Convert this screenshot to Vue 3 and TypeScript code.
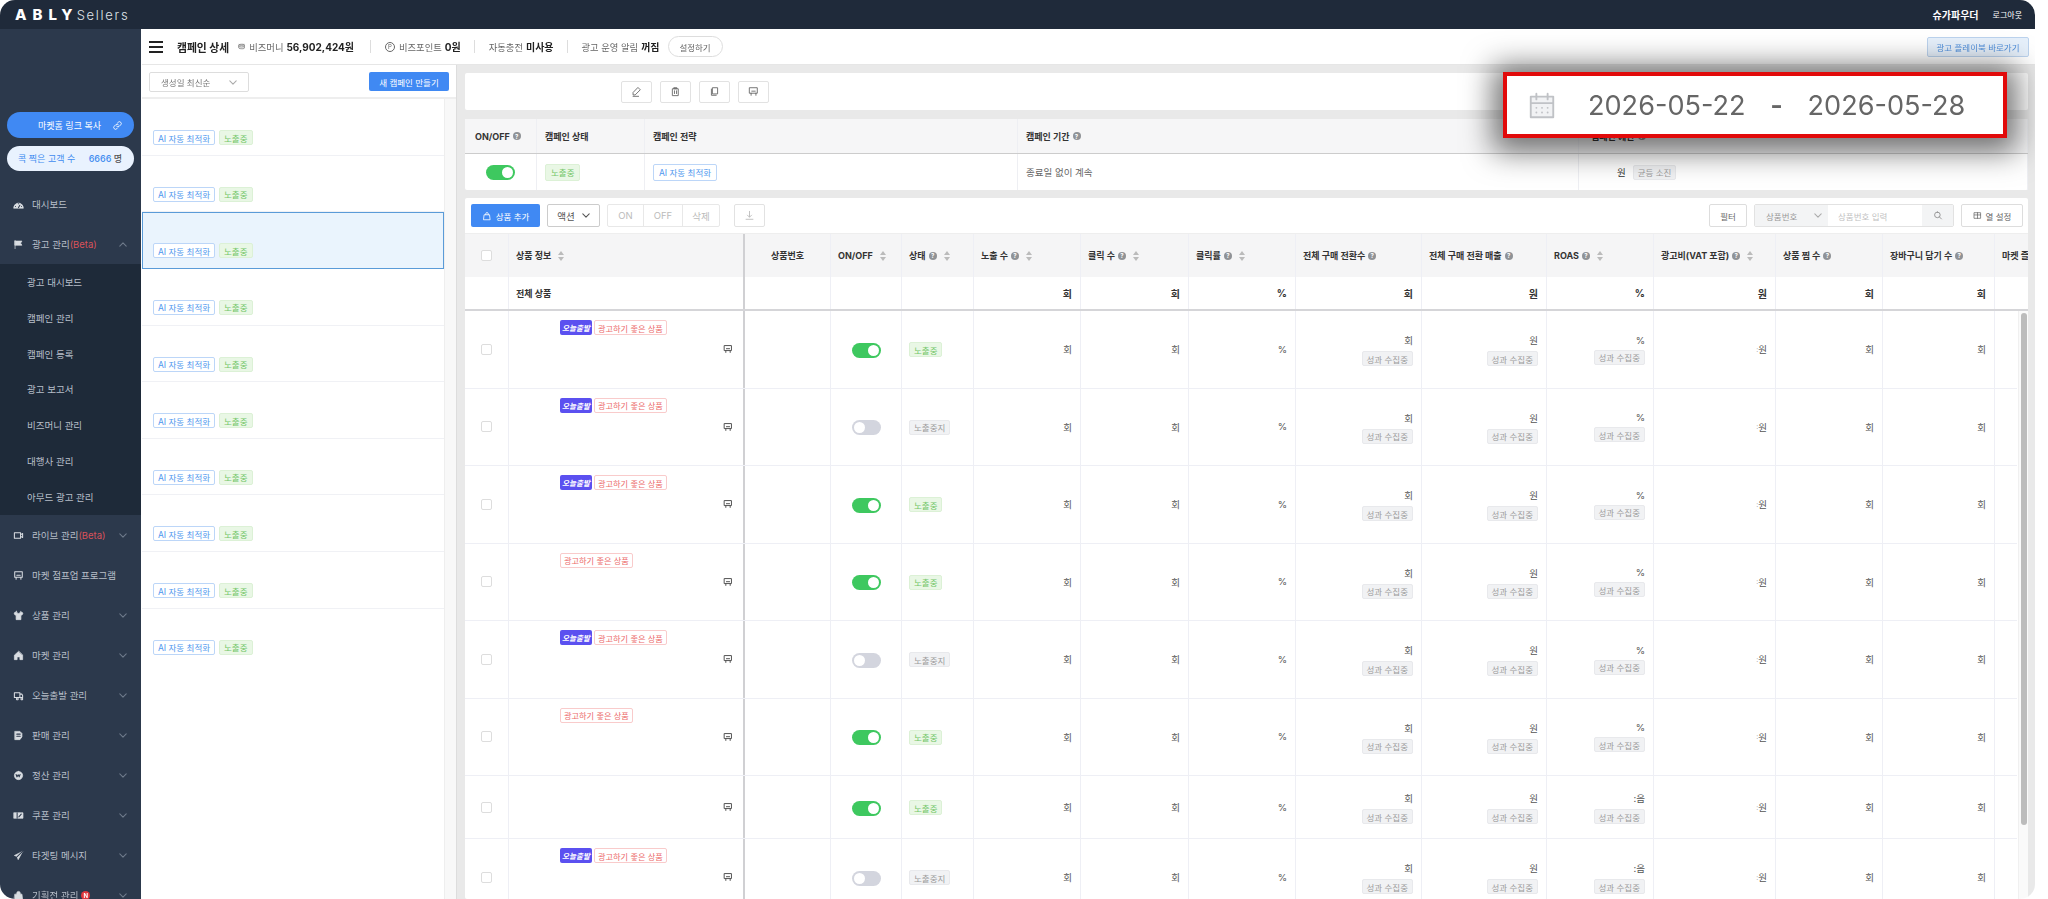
<script setup lang="ts">
type Row = { purple: boolean; red: boolean; on: boolean; roas: string };

const subMenu = ["광고 대시보드", "캠페인 관리", "캠페인 등록", "광고 보고서", "비즈머니 관리", "대행사 관리", "아무드 광고 관리"];
const navBottom = [
    { label: "라이브 관리", icon: "video", beta: true, line: true },
    { label: "마켓 점프업 프로그램", icon: "board", noArrow: true, line: true },
    { label: "상품 관리", icon: "shirt" },
    { label: "마켓 관리", icon: "home" },
    { label: "오늘출발 관리", icon: "truck", line: true },
    { label: "판매 관리", icon: "doc" },
    { label: "정산 관리", icon: "won" },
    { label: "쿠폰 관리", icon: "coupon" },
    { label: "타겟팅 메시지", icon: "plane" },
    { label: "기획전 관리", icon: "bag", badge: true },
];

const icons: Record<string, string> = {
    gauge: "M1 13a7 7 0 0 1 14 0z",
    flag: "M3 2v12 M3 3h10l-2 3 2 3H3z",
    video: "M2 4h9v8H2z M11 7l3-2v6l-3-2z",
    board: "M2.5 2.5h11v8h-11z M4.5 10.5v3 M11.5 10.5v3 M5.5 7.5h5",
    shirt: "M5 2 1.5 4.5 3 7.5l1.5-.7V14h7V6.8l1.5.7 1.5-3L11 2a3 3 0 0 1-6 0z",
    home: "M8 2 2 7.5V14h4v-4h4v4h4V7.5z",
    truck: "M2 4h8v7H2z M10 6h3l1 2v3h-4z M5 13a1.3 1.3 0 1 0 0-.01 M11.5 13a1.3 1.3 0 1 0 0-.01",
    doc: "M3 2h7l3 3v5l-3 4H3z",
    won: "M8 2a6 6 0 1 0 0 12A6 6 0 0 0 8 2z",
    coupon: "M1.5 4h13v8h-13z",
    plane: "M14 2 2 8l4 1.5L7.5 14 14 2z",
    bag: "M3 6h10l1 8H2z M5.5 6V4.5a2.5 2.5 0 0 1 5 0V6",
    pencil: "M10.5 2.5l3 3L6 13H3v-3z M3 15h8",
    trash: "M4 4h8v10H4z M6 2.5h4V4H6z M6.5 7v4 M9.5 7v4",
    copy: "M5.5 2.5h7v9h-7z M3.5 4.5v9h7",
    bagAdd: "M4 6h8l1 8H3z M6 6V4.5a2 2 0 0 1 4 0V6",
    download: "M8 2v8 M5 7.5 8 10.5l3-3 M3 13.5h10",
    link: "M6.8 9.2a2.6 2.6 0 0 0 3.7 0l2.2-2.2a2.6 2.6 0 0 0-3.7-3.7L8 4.3 M9.2 6.8a2.6 2.6 0 0 0-3.7 0L3.3 9a2.6 2.6 0 0 0 3.7 3.7l1-1",
    coin: "M3 5c0-1.4 10-1.4 10 0v6c0 1.4-10 1.4-10 0z M3 5c0 1.4 10 1.4 10 0 M3 8c0 1.4 10 1.4 10 0",
    search: "M7 2.5a4.5 4.5 0 1 0 0 9 4.5 4.5 0 0 0 0-9z M10.3 10.3 13.5 13.5",
    columns: "M2.5 3h11v10h-11z M8 3v10 M2.5 7h11",
    cal: "M2 3.5h12v11H2z M2 7h12 M5 2v3 M11 2v3",
    calDots: "M5 9.5h.01 M8 9.5h.01 M11 9.5h.01 M5 12h.01 M8 12h.01 M11 12h.01",
};

// dark detail drawn over the filled sidebar icons
const overlays: Record<string, string> = {
    gauge: "M3.6 11h.01 M8 7h.01 M12.4 11h.01 M8 12.5 10 9",
    doc: "M5.5 6h5 M5.5 9h5",
    won: "M4.5 6.5l1.2 3.5L7.5 7l1.5 3 1.3-3.5",
    coupon: "M6 4v8 M8.5 10l3.5-4",
    plane: "M6 9.5 14 2",
};

const columns = [
    { label: "상품 정보", sort: true },
    { label: "상품번호", center: true },
    { label: "ON/OFF", sort: true },
    { label: "상태", help: true, sort: true },
    { label: "노출 수", help: true, sort: true },
    { label: "클릭 수", help: true, sort: true },
    { label: "클릭률", help: true, sort: true },
    { label: "전체 구매 전환수", help: true },
    { label: "전체 구매 전환 매출", help: true },
    { label: "ROAS", help: true, sort: true },
    { label: "광고비(VAT 포함)", help: true, sort: true },
    { label: "상품 찜 수", help: true },
    { label: "장바구니 담기 수", help: true },
    { label: "마켓 즐겨찾기 수" },
];

const rows: Row[] = [
    { purple: true, red: true, on: true, roas: "%" },
    { purple: true, red: true, on: false, roas: "%" },
    { purple: true, red: true, on: true, roas: "%" },
    { purple: false, red: true, on: true, roas: "%" },
    { purple: true, red: true, on: false, roas: "%" },
    { purple: false, red: true, on: true, roas: "%" },
    { purple: false, red: false, on: true, roas: ":음" },
    { purple: true, red: true, on: false, roas: ":음" },
];
</script>

<template>
    <div class="frame">
        <header class="topbar">
            <div class="logo"><b>ABLY</b><span>Sellers</span></div>
            <div class="topbar__user">
                <b>슈가파우더</b>
                <span>로그아웃</span>
            </div>
        </header>

        <div class="body">
            <aside class="sidebar">
                <div class="side-btn side-btn--blue">
                    <span>마켓홈 링크 복사</span>
                    <svg class="side-btn__icon" viewBox="0 0 16 16"><path :d="icons.link" /></svg>
                </div>
                <div class="side-btn side-btn--light">
                    <span>콕 찍은 고객 수</span>
                    <span class="side-btn__count">6666 <em>명</em></span>
                </div>

                <nav class="nav">
                    <div class="nav__item">
                        <svg class="nav__icon" viewBox="0 0 16 16">
                            <path :d="icons.gauge" />
                            <path class="nav__detail" :d="overlays.gauge" />
                        </svg>
                        <span>대시보드</span>
                    </div>
                    <div class="nav__item">
                        <svg class="nav__icon" viewBox="0 0 16 16"><path :d="icons.flag" /></svg>
                        <span>광고 관리<i>(Beta)</i></span>
                        <svg class="nav__arrow nav__arrow--up" viewBox="0 0 10 6"><path d="M1 1l4 4 4-4" /></svg>
                    </div>
                    <div class="nav__sub">
                        <div v-for="label in subMenu" :key="label" class="nav__sub-item">{{ label }}</div>
                    </div>
                    <div v-for="item in navBottom" :key="item.label" class="nav__item">
                        <svg class="nav__icon" :class="{ 'nav__icon--line': item.line }" viewBox="0 0 16 16">
                            <path :d="icons[item.icon]" />
                            <path v-if="overlays[item.icon]" class="nav__detail" :d="overlays[item.icon]" />
                        </svg>
                        <span>{{ item.label }}<i v-if="item.beta">(Beta)</i></span>
                        <span v-if="item.badge" class="nav__badge">N</span>
                        <svg v-if="!item.noArrow" class="nav__arrow" viewBox="0 0 10 6"><path d="M1 1l4 4 4-4" /></svg>
                    </div>
                </nav>
            </aside>

            <div class="content">
                <div class="pagehead">
                    <button class="burger" type="button"><i /><i /><i /></button>
                    <h1>캠페인 상세</h1>
                    <div class="stat stat--money">
                        <svg class="stat__icon" viewBox="0 0 16 16"><path :d="icons.coin" /></svg>
                        <span>비즈머니</span><b>56,902,424원</b>
                    </div>
                    <div class="stat stat--line">
                        <span class="stat__p">P</span>
                        <span>비즈포인트</span><b>0원</b>
                    </div>
                    <div class="stat stat--line"><span>자동충전</span><b>미사용</b></div>
                    <div class="stat stat--line"><span>광고 운영 알림</span><b>꺼짐</b></div>
                    <button class="pill" type="button">설정하기</button>
                    <button class="playbook" type="button">광고 플레이북 바로가기</button>
                </div>

                <div class="split">
                    <section class="list">
                        <div class="list__filters">
                            <div class="select">
                                <span>생성일 최신순</span>
                                <svg class="chev" viewBox="0 0 10 6"><path d="M1 1l4 4 4-4" /></svg>
                            </div>
                            <button class="btn-primary" type="button">새 캠페인 만들기</button>
                        </div>
                        <div class="list__scroll">
                            <ul class="list__items">
                                <li v-for="n in 10" :key="n" class="list__item" :class="{ 'list__item--active': n === 3 }">
                                    <span class="tag tag--ai">AI 자동 최적화</span>
                                    <span class="tag tag--green">노출중</span>
                                </li>
                            </ul>
                        </div>
                    </section>

                    <section class="detail">
                        <div class="actions card">
                            <button v-for="name in ['pencil', 'trash', 'copy', 'board']" :key="name" class="icon-btn" type="button">
                                <svg viewBox="0 0 16 16"><path :d="icons[name]" /></svg>
                            </button>
                        </div>

                        <div class="summary card">
                            <div class="summary__head">
                                <div>ON/OFF <span class="help">?</span></div>
                                <div>캠페인 상태</div>
                                <div>캠페인 전략</div>
                                <div>캠페인 기간 <span class="help">?</span></div>
                                <div class="summary__budget">캠페인 예산 <span class="help">?</span></div>
                            </div>
                            <div class="summary__row">
                                <div class="center"><span class="toggle toggle--on" /></div>
                                <div><span class="tag tag--green tag--big">노출중</span></div>
                                <div><span class="tag tag--ai tag--big">AI 자동 최적화</span></div>
                                <div class="muted">종료일 없이 계속</div>
                                <div class="summary__budget-value">
                                    <span>원</span>
                                    <span class="tag tag--grey">균등 소진</span>
                                </div>
                            </div>
                        </div>

                        <div class="products card">
                            <div class="products__bar">
                                <button class="btn-primary btn-primary--add" type="button">
                                    <svg viewBox="0 0 16 16"><path :d="icons.bagAdd" /></svg>
                                    상품 추가
                                </button>
                                <div class="action-select">
                                    액션
                                    <svg class="chev chev--dark" viewBox="0 0 10 6"><path d="M1 1l4 4 4-4" /></svg>
                                </div>
                                <div class="btn-group">
                                    <span>ON</span><span>OFF</span><span>삭제</span>
                                </div>
                                <button class="icon-btn icon-btn--flat" type="button">
                                    <svg viewBox="0 0 16 16"><path :d="icons.download" /></svg>
                                </button>
                                <div class="products__spacer" />
                                <button class="ghost" type="button">필터</button>
                                <div class="search">
                                    <div class="search__type">
                                        상품번호
                                        <svg class="chev" viewBox="0 0 10 6"><path d="M1 1l4 4 4-4" /></svg>
                                    </div>
                                    <div class="search__input">상품번호 입력</div>
                                    <div class="search__go">
                                        <svg viewBox="0 0 16 16"><path :d="icons.search" /></svg>
                                    </div>
                                </div>
                                <button class="ghost ghost--cols" type="button">
                                    <svg viewBox="0 0 16 16"><path :d="icons.columns" /></svg>
                                    열 설정
                                </button>
                            </div>

                            <div class="grid grid--head">
                                <div class="cell cell--check"><span class="check" /></div>
                                <div
                                    v-for="(col, i) in columns"
                                    :key="col.label"
                                    class="cell"
                                    :class="{ 'cell--center': col.center, 'cell--split': i === 0 }"
                                >
                                    <span>{{ col.label }}</span>
                                    <span v-if="col.help" class="help">?</span>
                                    <span v-if="col.sort" class="sort"><i /><i /></span>
                                </div>
                            </div>

                            <div class="grid grid--total">
                                <div class="cell" />
                                <div class="cell cell--split">전체 상품</div>
                                <div class="cell" />
                                <div class="cell" />
                                <div class="cell" />
                                <div class="cell cell--num">회</div>
                                <div class="cell cell--num">회</div>
                                <div class="cell cell--num">%</div>
                                <div class="cell cell--num">회</div>
                                <div class="cell cell--num">원</div>
                                <div class="cell cell--num">%</div>
                                <div class="cell cell--num">원</div>
                                <div class="cell cell--num">회</div>
                                <div class="cell cell--num">회</div>
                                <div class="cell" />
                            </div>

                            <div class="rows">
                                <div
                                    v-for="(row, i) in rows"
                                    :key="i"
                                    class="grid grid--row"
                                    :class="{ 'grid--short': !row.red }"
                                >
                                    <div class="cell cell--check"><span class="check" /></div>
                                    <div class="cell cell--split cell--product">
                                        <div class="product-tags">
                                            <span v-if="row.purple" class="tag tag--purple">오늘출발</span>
                                            <span v-if="row.red" class="tag tag--red">광고하기 좋은 상품</span>
                                        </div>
                                        <svg class="product-icon" viewBox="0 0 16 16"><path :d="icons.board" /></svg>
                                    </div>
                                    <div class="cell" />
                                    <div class="cell cell--toggle">
                                        <span class="toggle" :class="{ 'toggle--on': row.on }" />
                                    </div>
                                    <div class="cell cell--status">
                                        <span class="tag" :class="row.on ? 'tag--green' : 'tag--grey'">{{ row.on ? "노출중" : "노출중지" }}</span>
                                    </div>
                                    <div class="cell cell--val">회</div>
                                    <div class="cell cell--val">회</div>
                                    <div class="cell cell--val">%</div>
                                    <div class="cell cell--stack"><span>회</span><span class="tag tag--grey">성과 수집중</span></div>
                                    <div class="cell cell--stack"><span>원</span><span class="tag tag--grey">성과 수집중</span></div>
                                    <div class="cell cell--stack"><span>{{ row.roas }}</span><span class="tag tag--grey">성과 수집중</span></div>
                                    <div class="cell cell--val"><em class="mark">:</em>원</div>
                                    <div class="cell cell--val">회</div>
                                    <div class="cell cell--val">회</div>
                                    <div class="cell" />
                                </div>
                                <div class="scrollbar"><i /></div>
                            </div>
                        </div>
                    </section>
                </div>
            </div>
        </div>

        <!-- highlighted date range laid over the page -->
        <div class="date-callout">
            <svg class="date-callout__icon" viewBox="0 0 16 16">
                <path class="date-callout__cal" :d="icons.cal" />
                <path :d="icons.calDots" />
            </svg>
            <span class="date-callout__date">2026-05-22</span>
            <span class="date-callout__dash">-</span>
            <span class="date-callout__date">2026-05-28</span>
        </div>
    </div>
</template>

<style>
    html,
    body {
        margin: 0;
        background: #fff;
    }
</style>

<style scoped>
    * {
        box-sizing: border-box;
    }

    svg {
        fill: none;
        stroke: currentColor;
        stroke-width: 1.3;
        stroke-linecap: round;
        stroke-linejoin: round;
    }

    button {
        font-family: inherit;
        cursor: pointer;
    }

    .frame {
        position: relative;
        width: 2035px;
        height: 899px;
        overflow: hidden;
        display: flex;
        flex-direction: column;
        border-radius: 15px;
        font-family: Inter, "Noto Sans CJK KR", sans-serif;
        font-size: 9.5px;
        color: #333;
        background: #fff;
        filter: blur(0.4px);
    }

    .topbar {
        flex: none;
        height: 29px;
        padding: 0 13px 0 15px;
        display: flex;
        align-items: center;
        justify-content: space-between;
        background: #1f2a3a;
        color: #fff;
    }

    .logo {
        display: flex;
        align-items: baseline;
        font-size: 13px;
        color: #dfe3e8;
    }

    .logo b {
        margin-right: -2px;
        color: #fff;
        font-size: 15px;
        letter-spacing: 6px;
        font-weight: 800;
    }

    .logo span {
        letter-spacing: 1.7px;
        font-weight: 300;
    }

    .topbar__user {
        display: flex;
        align-items: center;
        gap: 14px;
        font-size: 10px;
    }

    .topbar__user span {
        font-size: 8px;
    }

    .body {
        flex: 1;
        min-height: 0;
        display: flex;
    }

    .sidebar {
        flex: none;
        width: 141px;
        padding-top: 83px;
        background: #2c394c;
        color: #b8bfc9;
    }

    .side-btn {
        position: relative;
        height: 26px;
        margin: 0 7px 8px;
        display: flex;
        align-items: center;
        border-radius: 13px;
    }

    .side-btn--blue {
        justify-content: center;
        padding-right: 2px;
        background: #4089f3;
        color: #fff;
        font-size: 9px;
    }

    .side-btn__icon {
        position: absolute;
        right: 11px;
        width: 11px;
        height: 11px;
    }

    .side-btn--light {
        height: 25px;
        padding: 0 12px 0 11px;
        justify-content: space-between;
        background: #e9f2fe;
        color: #3f8cf0;
        font-size: 9px;
    }

    .side-btn__count {
        font-weight: 500;
    }

    .side-btn__count em {
        font-style: normal;
        color: #555;
    }

    .nav {
        margin-top: 13px;
    }

    .nav__item {
        height: 40px;
        padding: 0 14px 0 13px;
        display: flex;
        align-items: center;
        gap: 8px;
        white-space: nowrap;
    }

    .nav__item i {
        font-style: normal;
        color: #d9525a;
    }

    .nav__icon {
        flex: none;
        width: 11px;
        height: 11px;
        color: #d9dde2;
        fill: #d9dde2;
        stroke-width: 1;
    }

    .nav__icon--line {
        fill: none;
        stroke-width: 1.5;
    }

    .nav__detail {
        fill: none;
        stroke: #2c394c;
        stroke-width: 1.5;
    }

    .nav__arrow {
        width: 8px;
        height: 5px;
        margin-left: auto;
        color: #6f7b8b;
    }

    .nav__arrow--up {
        transform: rotate(180deg);
    }

    .nav__badge {
        width: 9px;
        height: 9px;
        margin-left: -5px;
        display: grid;
        place-items: center;
        border-radius: 50%;
        background: #e0383e;
        color: #fff;
        font-size: 6px;
        font-weight: 700;
    }

    .nav__sub {
        height: 251px;
        padding-left: 27px;
        background: #1e2a39;
    }

    .nav__sub-item {
        height: 35.85px;
        display: flex;
        align-items: center;
    }

    .content {
        flex: 1;
        min-width: 0;
        margin-left: 1px;
        display: flex;
        flex-direction: column;
    }

    .pagehead {
        flex: none;
        height: 36px;
        padding: 0 6px 0 7px;
        display: flex;
        align-items: center;
        border-bottom: 1px solid #e6e6e6;
        color: #666;
    }

    .burger {
        width: 14px;
        height: 12px;
        margin-right: 14px;
        padding: 0;
        display: flex;
        flex-direction: column;
        justify-content: space-between;
        border: 0;
        background: none;
    }

    .burger i {
        height: 2px;
        background: #222;
    }

    .pagehead h1 {
        margin: 0 8px 0 0;
        font-size: 10.8px;
        font-weight: 700;
        color: #222;
    }

    .stat {
        display: flex;
        align-items: center;
        gap: 2px;
        padding-right: 13px;
        font-size: 9.3px;
        white-space: nowrap;
    }

    .stat b {
        margin-left: 1px;
        font-size: 10px;
        color: #222;
    }

    .stat--money {
        padding-right: 16px;
    }

    .stat--line {
        padding-left: 14px;
        border-left: 1px solid #ddd;
        height: 13px;
    }

    .stat:last-of-type {
        padding-right: 8px;
    }

    .stat__icon {
        width: 9px;
        height: 9px;
        margin-right: 1px;
    }

    .stat__p {
        width: 10px;
        height: 10px;
        margin-right: 2px;
        display: grid;
        place-items: center;
        border: 1px solid #666;
        border-radius: 50%;
        font-size: 6px;
    }

    .pill {
        width: 55px;
        height: 21px;
        border: 1px solid #ddd;
        border-radius: 11px;
        background: #fff;
        color: #666;
        font-size: 8.5px;
    }

    .playbook {
        width: 102px;
        height: 20px;
        margin-left: auto;
        border: 1px solid #bcd3ee;
        border-radius: 2px;
        background: #e6f0fb;
        color: #4f8fdc;
        font-size: 8.5px;
    }

    .split {
        flex: 1;
        min-height: 0;
        display: flex;
    }

    .list {
        flex: none;
        width: 314px;
        display: flex;
        flex-direction: column;
    }

    .list__filters {
        flex: none;
        height: 34px;
        padding: 7px 7px 0;
        display: flex;
        justify-content: space-between;
        border-bottom: 2px solid #eee;
    }

    .select {
        width: 100px;
        height: 20px;
        padding: 0 11px;
        display: flex;
        align-items: center;
        justify-content: space-between;
        border: 1px solid #ddd;
        border-radius: 2px;
        color: #777;
        font-size: 8.5px;
    }

    .chev {
        width: 8px;
        height: 5px;
        color: #aaa;
    }

    .chev--dark {
        color: #555;
    }

    .btn-primary {
        width: 80px;
        height: 19px;
        border: 0;
        border-radius: 2px;
        background: #4089f3;
        color: #fff;
        font-size: 8.5px;
    }

    .list__scroll {
        flex: 1;
        padding-right: 11px;
        background: #f8f8f8;
    }

    .list__items {
        height: 100%;
        margin: 0;
        padding: 0;
        list-style: none;
        border-right: 1px solid #eee;
        background: #fff;
    }

    .list__item {
        height: 56.65px;
        padding: 31px 0 0 11px;
        display: flex;
        align-items: flex-start;
        gap: 4px;
        border-bottom: 1px solid #f0f1f5;
    }

    .list__item:last-child {
        border-bottom: 0;
    }

    .list__item--active {
        padding-left: 10px;
        padding-top: 30px;
        border: 1.5px solid #5a9bd8;
        background: #eaf4fd;
    }

    .tag {
        height: 15px;
        padding: 0 4px;
        display: inline-flex;
        align-items: center;
        border: 1px solid transparent;
        border-radius: 2px;
        font-size: 8.5px;
        white-space: nowrap;
    }

    .tag--big {
        height: 17px;
        padding: 0 5px;
    }

    .tag--ai {
        border-color: #bcd6f8;
        background: #fff;
        color: #4f97ee;
    }

    .tag--green {
        border-color: #dcf1d6;
        background: #e9f7e5;
        color: #71c667;
    }

    .tag--grey {
        border-color: #e8e9ec;
        background: #f1f2f4;
        color: #9b9b9b;
    }

    .tag--red {
        padding: 0 3px;
        border-color: #f9cbcb;
        background: #fff;
        color: #ec6a6a;
        font-size: 8.2px;
    }

    .tag--purple {
        padding: 0 1px;
        background: #5b50f0;
        color: #fff;
        font-size: 7.6px;
        font-style: italic;
        font-weight: 700;
    }

    .detail {
        flex: 1;
        min-width: 0;
        padding: 8px 7px 0 8px;
        display: flex;
        flex-direction: column;
        gap: 8px;
        border-left: 1px solid #ddd;
        background: #e9e9e9;
    }

    .card {
        flex: none;
        background: #fff;
        border-radius: 2px;
    }

    .actions {
        height: 37px;
        padding-left: 156px;
        display: flex;
        align-items: center;
        gap: 8px;
    }

    .icon-btn {
        width: 31px;
        height: 22px;
        padding: 0;
        display: grid;
        place-items: center;
        border: 1px solid #e2e2e2;
        border-radius: 2px;
        background: #fff;
        color: #666;
    }

    .icon-btn svg {
        width: 11px;
        height: 11px;
    }

    .icon-btn--flat {
        height: 23px;
        margin-left: 7px;
        color: #bbb;
    }

    .summary {
        height: 71px;
        margin-top: 1px;
    }

    .summary__head,
    .summary__row {
        display: grid;
        grid-template-columns: 72px 108px 373px 561px 1fr;
    }

    .summary__head {
        height: 35px;
        border-bottom: 1px solid #ccc;
        background: #f6f6f7;
        font-weight: 700;
        color: #333;
        font-size: 9px;
    }

    .summary__head > div,
    .summary__row > div {
        padding: 0 8px;
        display: flex;
        align-items: center;
        gap: 3px;
        border-right: 1px solid #eeeff3;
    }

    .summary__head > div:first-child {
        padding: 0 0 0 10px;
    }

    .summary__head .summary__budget {
        padding-left: 12px;
    }

    .summary__row {
        height: 36px;
    }

    .summary__row .center {
        justify-content: center;
    }

    .summary__budget-value {
        padding-left: 38px !important;
        gap: 7px !important;
    }

    .muted {
        color: #666;
    }

    .help {
        width: 8px;
        height: 8px;
        flex: none;
        display: inline-grid;
        place-items: center;
        border-radius: 50%;
        background: #8f9296;
        color: #fff;
        font-size: 6px;
        font-weight: 700;
    }

    .toggle {
        position: relative;
        width: 29px;
        height: 15px;
        display: block;
        border-radius: 8px;
        background: #d3d5de;
    }

    .toggle::after {
        content: "";
        position: absolute;
        top: 2px;
        left: 2px;
        width: 11px;
        height: 11px;
        border-radius: 50%;
        background: #fff;
    }

    .toggle--on {
        background: #3ec85f;
    }

    .toggle--on::after {
        left: 16px;
    }

    .products {
        flex: 1;
        min-height: 0;
        margin-top: 0;
        overflow: hidden;
    }

    .products__bar {
        height: 36px;
        padding: 6px 5px 0 6px;
        display: flex;
        align-items: flex-start;
        gap: 7px;
        border-bottom: 1px solid #eee;
    }

    .products__spacer {
        flex: 1;
    }

    .btn-primary--add {
        width: 69px;
        height: 23px;
        display: flex;
        align-items: center;
        justify-content: center;
        gap: 4px;
    }

    .btn-primary--add svg {
        width: 10px;
        height: 10px;
    }

    .action-select {
        width: 53px;
        height: 23px;
        display: flex;
        align-items: center;
        justify-content: center;
        gap: 7px;
        border: 1px solid #ccc;
        border-radius: 2px;
        color: #555;
    }

    .btn-group {
        width: 113px;
        height: 23px;
        display: grid;
        grid-template-columns: 36px 39px 1fr;
        border: 1px solid #e8e8e8;
        border-radius: 2px;
        color: #bbb;
    }

    .btn-group span {
        display: grid;
        place-items: center;
        border-right: 1px solid #e8e8e8;
    }

    .btn-group span:last-child {
        border-right: 0;
    }

    .ghost {
        width: 38px;
        height: 23px;
        border: 1px solid #ddd;
        border-radius: 2px;
        background: #fff;
        color: #666;
        font-size: 8.5px;
    }

    .ghost--cols {
        width: 62px;
        display: flex;
        align-items: center;
        justify-content: center;
        gap: 4px;
    }

    .ghost--cols svg {
        width: 9px;
        height: 9px;
    }

    .search {
        width: 200px;
        height: 23px;
        display: grid;
        grid-template-columns: 73px 94px 1fr;
        border: 1px solid #e2e2e2;
        border-radius: 2px;
        color: #aaa;
        font-size: 8.5px;
    }

    .search__type {
        padding: 0 6px 0 11px;
        display: flex;
        align-items: center;
        justify-content: space-between;
        background: #f3f4f5;
        color: #999;
    }

    .search__input {
        padding-left: 10px;
        display: flex;
        align-items: center;
        color: #c2c2c2;
    }

    .search__go {
        display: grid;
        place-items: center;
        background: #f3f4f5;
        color: #888;
    }

    .search__go svg {
        width: 10px;
        height: 11px;
    }

    .grid {
        display: grid;
        grid-template-columns: 44px 236px 86px 71px 72px 107px 108px 107px 126px 125px 107px 122px 107px 112px 60px;
        border-bottom: 1px solid #eeeff5;
    }

    .grid--head {
        height: 43px;
        border-bottom: 0;
        background: #f5f5f6;
        font-size: 9px;
        font-weight: 700;
        color: #333;
        overflow: hidden;
    }

    .grid--total {
        height: 34px;
        border-bottom: 2px solid #d5d5d8;
        font-size: 9px;
        font-weight: 700;
    }

    .grid--row {
        height: 77.5px;
        width: 1552px;
        overflow: hidden;
        font-size: 9.5px;
        color: #555;
    }

    .grid--short {
        height: 63px;
    }

    .cell {
        min-width: 0;
        padding: 0 7px;
        display: flex;
        align-items: center;
        gap: 3px;
        border-right: 1px solid #eeeff5;
        white-space: nowrap;
        overflow: hidden;
    }

    .cell--check {
        justify-content: center;
        padding: 0;
    }

    .cell--center {
        justify-content: center;
    }

    .cell--split {
        border-right: 2px solid #d0d0d3;
    }

    .cell--num,
    .cell--val {
        justify-content: flex-end;
        padding-right: 8px;
    }

    .cell--num {
        font-size: 10px;
    }

    .cell--toggle {
        justify-content: center;
        padding-top: 2px;
    }

    .cell--status {
        padding-top: 1px;
    }

    .cell--stack {
        flex-direction: column;
        align-items: flex-end;
        justify-content: center;
        gap: 4px;
        padding-top: 1px;
        padding-right: 8px;
    }

    .cell--product {
        position: relative;
        display: block;
        padding: 9px 0 0 51px;
    }

    .product-tags {
        display: flex;
        gap: 2px;
    }

    .product-icon {
        position: absolute;
        top: 50%;
        right: 10px;
        width: 10px;
        height: 10px;
        margin-top: -5px;
        color: #555;
        stroke-width: 1.6;
    }

    .check {
        width: 11px;
        height: 11px;
        border: 1px solid #ddd;
        border-radius: 2px;
        background: #fff;
    }

    .sort {
        margin-left: 4px;
        display: inline-flex;
        flex-direction: column;
        gap: 2px;
    }

    .sort i {
        width: 0;
        height: 0;
        border-left: 3px solid transparent;
        border-right: 3px solid transparent;
        border-bottom: 4px solid #bbb;
    }

    .sort i:last-child {
        transform: rotate(180deg);
    }

    .mark {
        margin-right: -3px;
        font-style: normal;
        color: #aaa;
        font-size: 7px;
    }

    .rows {
        position: relative;
        overflow: hidden;
        height: 100%;
    }

    .scrollbar {
        position: absolute;
        top: 0;
        right: 0;
        bottom: 0;
        width: 10px;
        border-left: 1px solid #f0f0f0;
        background: #fafafa;
    }

    .scrollbar i {
        display: block;
        width: 6px;
        height: 512px;
        margin: 2px 0 0 2px;
        border-radius: 3px;
        background: #bcbcbc;
    }

    .date-callout {
        position: absolute;
        top: 72px;
        left: 1503px;
        width: 504px;
        height: 66px;
        padding-left: 20px;
        display: flex;
        align-items: center;
        border: 4px solid #e10a0a;
        background: #fff;
        box-shadow: 0 4px 30px 10px rgba(0, 0, 0, 0.55);
        color: #666;
        font-size: 27.1px;
    }

    .date-callout__icon {
        width: 30px;
        height: 30px;
        margin-right: 31px;
        color: #c0c2c6;
        stroke-width: 1;
    }

    .date-callout__cal {
        fill: #f1f2f4;
    }

    .date-callout__dash {
        width: 62px;
        text-align: center;
        font-weight: 600;
    }
</style>
